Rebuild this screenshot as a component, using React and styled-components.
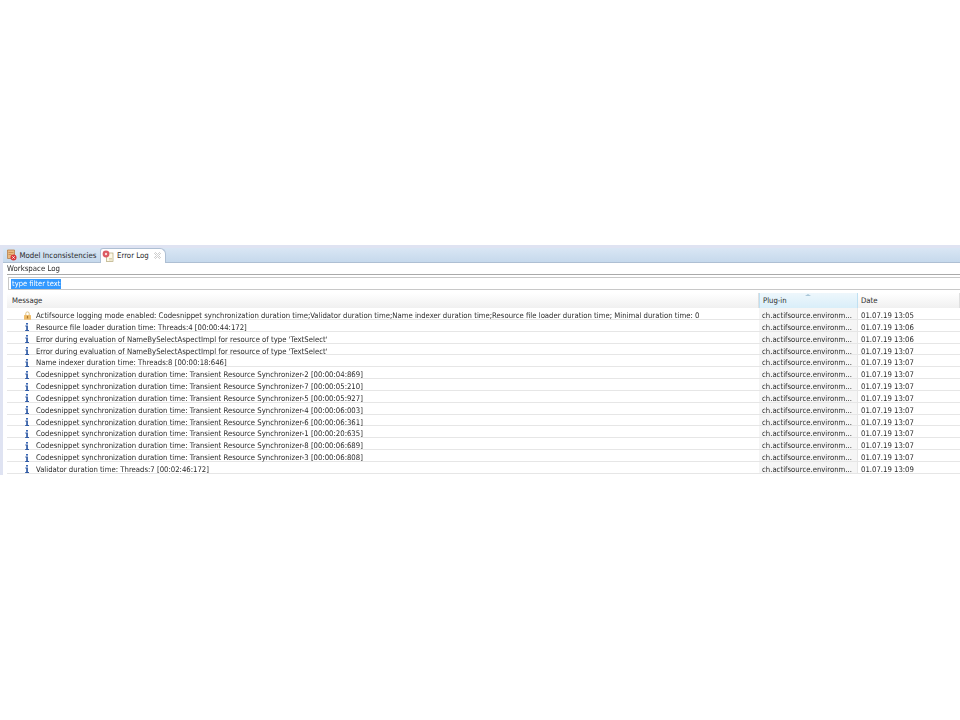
import React from "react"
import styled, { createGlobalStyle } from "styled-components"

const Global = createGlobalStyle`
  html, body { margin: 0; padding: 0; background: #fff; }
  body { font-family: "DejaVu Sans", "Open Sans", sans-serif; font-stretch: condensed; color: #2a2a2a; }
`

const Page = styled.div`
  width: 960px;
  height: 720px;
  padding-top: 245px;
  box-sizing: border-box;
  overflow: hidden;
`
const View = styled.div`
  width: 960px;
  height: 230px;
  box-sizing: border-box;
  border-top: 3px solid #dfe3f2;
  border-left: 3px solid #dfe3f2;
  display: flex;
  flex-direction: column;
  filter: blur(0.3px);
`
const TabBar = styled.div`
  height: 14px;
  display: flex;
  align-items: flex-end;
  background: linear-gradient(#d9e6f4, #c6d9ec);
  border-bottom: 1px solid #aebfd3;
`
const Tab = styled.div`
  height: 14px;
  display: flex;
  align-items: center;
  gap: 2.5px;
  padding: 0 4px 0 4px;
  font-size: 7.8px;
  white-space: nowrap;
  box-sizing: border-box;
  ${p => p.$active && `
    height: 15px;
    margin-bottom: -1px;
    background: #fff;
    border: 1px solid #aebfd3;
    border-bottom: 0;
    border-radius: 3px 6px 0 0;
    padding: 0 4px 1px 1px;
  `}
`
const Body = styled.div`
  flex: 1;
  display: flex;
  flex-direction: column;
  min-height: 0;
`
const Title = styled.div`
  height: 11px;
  margin-left: 4px;
  font-size: 7.8px;
  line-height: 12px;
  border-bottom: 1px solid #aaa;
`
const FilterWrap = styled.div`
  margin: 2px 0 0 5px;
  height: 13px;
  box-sizing: border-box;
  border: 1px solid #c8c8c8;
  border-right: 0;
  display: flex;
  align-items: center;
  padding-left: 2px;
`
const Selected = styled.span`
  background: #3399ff;
  color: #fff;
  font-size: 7.5px;
  line-height: 10px;
  padding: 0 1px;
`
const Table = styled.div`
  margin: 3px 0 0 4px;
  display: grid;
  grid-template-columns: 752px 99px 1fr;
`
const HeadCell = styled.div`
  position: relative;
  height: 15px;
  padding-left: ${p => p.$pad}px;
  font-size: 7.7px;
  line-height: 16px;
  background: ${p => p.$sorted ? "linear-gradient(#eef7fc, #d9eef9)" : "linear-gradient(#fff, #f0f0f0)"};
  border-right: 1px solid ${p => p.$sorted ? "#bfe0f2" : "#e0e0e0"};
  ${p => p.$sorted && "border-left: 1px solid #bfe0f2;"}
`
const SortArrow = styled.span`
  position: absolute;
  top: 1px;
  left: 45px;
  width: 0;
  height: 0;
  border-left: 3px solid transparent;
  border-right: 3px solid transparent;
  border-bottom: 2px solid #a9c6d8;
`
const Cell = styled.div`
  height: 11.85px;
  box-sizing: border-box;
  padding-top: 3px;
  font-size: 7.7px;
  line-height: 9px;
  white-space: nowrap;
  border-bottom: 1px solid #e6e6e6;
  ${p => p.$plugin && "background: #f5f5f5; padding-left: 3px; border-right: 1px solid #e6e6e6;"}
  ${p => p.$date && "padding-left: 3px;"}
  ${p => p.$msg && "display: flex; align-items: flex-start; padding-left: 15.5px; gap: 4.5px;"}
`
const IconSlot = styled.span`
  width: 9px;
  height: 9px;
  flex: none;
  display: flex;
  align-items: center;
  justify-content: center;
`
const CloseMark = styled.svg`
  margin-left: 3px;
`

const InfoIcon = () => (
  <svg width="4" height="8" viewBox="0 0 4 8">
    <rect x="1" y="0" width="2" height="1.6" fill="#3a68b5" />
    <path d="M0.3 2.6h2.6v4.4H4V8H0.2V7h1V3.6H0.3z" fill="#2f5aa5" />
  </svg>
)

const LockIcon = () => (
  <svg width="9" height="9" viewBox="0 0 9 9">
    <path d="M2.8 4V2.6a1.7 1.7 0 0 1 3.4 0V4" fill="none" stroke="#d9bb78" strokeWidth="0.9" />
    <rect x="1" y="4" width="7" height="4.8" rx="0.6" fill="#eebd6c" />
    <rect x="3.9" y="5" width="1.2" height="2.4" fill="#a9752c" />
  </svg>
)

const ModelIcon = () => (
  <svg width="10" height="12" viewBox="0 0 10 12">
    <path d="M0.5 1h7v8.5h-7z" fill="#eab981" stroke="#b5763a" strokeWidth="0.7" />
    <path d="M1.5 3.5h5M1.5 5.5h3" stroke="#b5763a" strokeWidth="0.6" />
    <circle cx="6.5" cy="8.5" r="3" fill="#d8383a" />
    <path d="M5.3 7.3l2.4 2.4M7.7 7.3L5.3 9.7" stroke="#fff" strokeWidth="0.8" />
  </svg>
)

const LogIcon = () => (
  <svg width="12" height="12" viewBox="0 0 12 12">
    <rect x="4.5" y="3" width="6.5" height="8.4" fill="#fdf9e6" stroke="#b3a679" strokeWidth="0.7" />
    <circle cx="4" cy="4" r="3.4" fill="#dc5a62" />
    <circle cx="4" cy="4" r="1.2" fill="#f8dcdc" />
    <path d="M7 8.5h3M7 9.9h3" stroke="#c5b98a" strokeWidth="0.6" />
  </svg>
)

const rows = [
  ["warn", "Actifsource logging mode enabled: Codesnippet synchronization duration time;Validator duration time;Name indexer duration time;Resource file loader duration time; Minimal duration time: 0", "01.07.19 13:05"],
  ["info", "Resource file loader duration time: Threads:4 [00:00:44:172]", "01.07.19 13:06"],
  ["info", "Error during evaluation of NameBySelectAspectImpl for resource of type 'TextSelect'", "01.07.19 13:06"],
  ["info", "Error during evaluation of NameBySelectAspectImpl for resource of type 'TextSelect'", "01.07.19 13:07"],
  ["info", "Name indexer duration time: Threads:8 [00:00:18:646]", "01.07.19 13:07"],
  ["info", "Codesnippet synchronization duration time: Transient Resource Synchronizer-2 [00:00:04:869]", "01.07.19 13:07"],
  ["info", "Codesnippet synchronization duration time: Transient Resource Synchronizer-7 [00:00:05:210]", "01.07.19 13:07"],
  ["info", "Codesnippet synchronization duration time: Transient Resource Synchronizer-5 [00:00:05:927]", "01.07.19 13:07"],
  ["info", "Codesnippet synchronization duration time: Transient Resource Synchronizer-4 [00:00:06:003]", "01.07.19 13:07"],
  ["info", "Codesnippet synchronization duration time: Transient Resource Synchronizer-6 [00:00:06:361]", "01.07.19 13:07"],
  ["info", "Codesnippet synchronization duration time: Transient Resource Synchronizer-1 [00:00:20:635]", "01.07.19 13:07"],
  ["info", "Codesnippet synchronization duration time: Transient Resource Synchronizer-8 [00:00:06:689]", "01.07.19 13:07"],
  ["info", "Codesnippet synchronization duration time: Transient Resource Synchronizer-3 [00:00:06:808]", "01.07.19 13:07"],
  ["info", "Validator duration time: Threads:7 [00:02:46:172]", "01.07.19 13:09"],
]

export default function App() {
  return (
    <Page>
      <Global />
      <View>
        <TabBar>
          <Tab><ModelIcon />Model Inconsistencies</Tab>
          <Tab $active>
            <LogIcon />Error Log
            <CloseMark width="7" height="7" viewBox="0 0 7 7">
              <path d="M0.5 1.5l1-1 2 2 2-2 1 1-2 2 2 2-1 1-2-2-2 2-1-1 2-2z" stroke="#a8a8a8" strokeWidth="0.6" fill="none" />
            </CloseMark>
          </Tab>
        </TabBar>
        <Body>
          <Title>Workspace Log</Title>
          <FilterWrap><Selected>type filter text</Selected></FilterWrap>
          <Table>
            <HeadCell $pad={5}>Message</HeadCell>
            <HeadCell $pad={3} $sorted><SortArrow />Plug-in</HeadCell>
            <HeadCell $pad={3}>Date</HeadCell>
            {rows.map(([kind, text, date], i) => (
              <React.Fragment key={i}>
                <Cell $msg>
                  <IconSlot>{kind === "warn" ? <LockIcon /> : <InfoIcon />}</IconSlot>
                  {text}
                </Cell>
                <Cell $plugin>ch.actifsource.environm...</Cell>
                <Cell $date>{date}</Cell>
              </React.Fragment>
            ))}
          </Table>
        </Body>
      </View>
    </Page>
  )
}
